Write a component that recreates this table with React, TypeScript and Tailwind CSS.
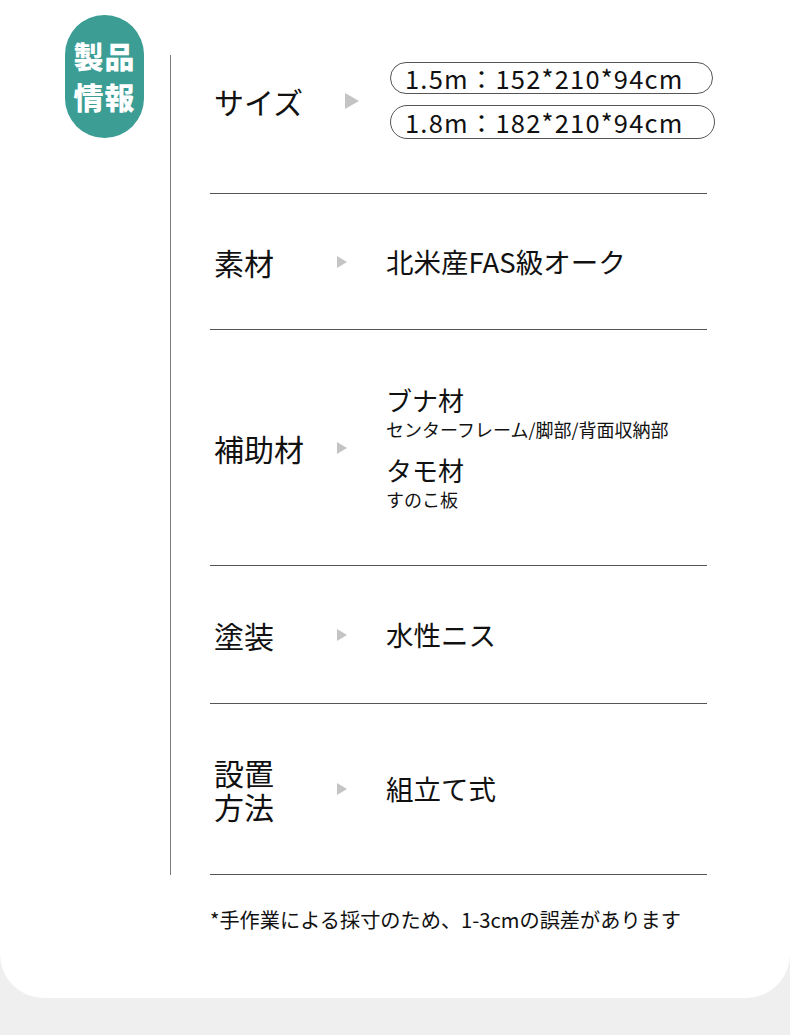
import React from "react";

const font = { fontFamily: '"Noto Sans CJK JP", "Noto Sans", sans-serif' };

function Tri({ big }: { big?: boolean }) {
  return big ? (
    <svg width="14" height="16" viewBox="0 0 14 16" className="shrink-0">
      <polygon points="0,0 14,8 0,16" fill="#c4c4c4" />
    </svg>
  ) : (
    <svg width="10" height="12" viewBox="0 0 10 12" className="shrink-0">
      <polygon points="0,0 10,6 0,12" fill="#c4c4c4" />
    </svg>
  );
}

function Divider() {
  return <div className="h-px bg-[#555]" />;
}

function Row({ h, label, children }: { h: string; label: React.ReactNode; children: React.ReactNode }) {
  return (
    <div className={`flex items-center pl-[4px] ${h}`}>
      <div className="w-[123px] shrink-0 text-[30px] leading-[36px] text-[#111]">{label}</div>
      <Tri />
      <div className="ml-[39px] shrink-0">{children}</div>
    </div>
  );
}

export default function App() {
  return (
    <div className="w-[790px] h-[1035px] bg-[#efefef] overflow-hidden" style={font}>
      <div className="h-[998px] bg-white rounded-b-[44px] pt-[15px] flex">
        <div className="w-[170px] shrink-0">
          <div className="ml-[65px] w-[79px] h-[123px] rounded-full bg-[#3b9d94] flex flex-col items-center justify-center text-white font-black text-[30px] leading-[41px] tracking-[1px] pb-[2px]">
            <span>製品</span>
            <span>情報</span>
          </div>
        </div>
        <div className="flex flex-col">
          <div className="mt-[40px] border-l border-[#7a7a7a] pl-[39px] w-[537px]">
            <div className="flex items-center pl-[4px] pt-[7px] pb-[54px]">
              <div className="w-[131px] shrink-0 text-[30px] leading-[36px] text-[#111]">サイズ</div>
              <Tri big />
              <div className="ml-[31px] shrink-0 flex flex-col gap-[11px]">
                <div className="w-[323px] h-[32px] rounded-full border border-[#555] flex items-center pl-[14px] text-[25.5px] tracking-[1.2px] text-[#111] leading-none">
                  1.5m：152*210*94cm
                </div>
                <div className="w-[325px] h-[34px] rounded-full border border-[#555] flex items-center pl-[14px] text-[25.5px] tracking-[1.2px] text-[#111] leading-none">
                  1.8m：182*210*94cm
                </div>
              </div>
            </div>
            <Divider />
            <Row h="h-[135px]" label="素材">
              <div className="text-[27.5px] text-[#111]">北米産FAS級オーク</div>
            </Row>
            <Divider />
            <Row h="h-[235px]" label="補助材">
              <div className="flex flex-col text-[#111]">
                <div className="text-[26px] leading-[32px]">ブナ材</div>
                <div className="text-[18px] leading-[26px]">センターフレーム/脚部/背面収納部</div>
                <div className="text-[26px] leading-[32px] mt-[12px]">タモ材</div>
                <div className="text-[18px] leading-[26px]">すのこ板</div>
              </div>
            </Row>
            <Divider />
            <Row h="h-[137px]" label="塗装">
              <div className="text-[27.5px] text-[#111]">水性ニス</div>
            </Row>
            <Divider />
            <Row
              h="h-[170px]"
              label={
                <div className="flex flex-col gap-[4px] leading-[30px]">
                  <span>設置</span>
                  <span>方法</span>
                </div>
              }
            >
              <div className="text-[27.5px] text-[#111]">組立て式</div>
            </Row>
            <Divider />
          </div>
          <div className="ml-[40px] mt-[30px] text-[20.2px] text-[#111]">
            *手作業による採寸のため、1-3cmの誤差があります
          </div>
        </div>
      </div>
    </div>
  );
}
